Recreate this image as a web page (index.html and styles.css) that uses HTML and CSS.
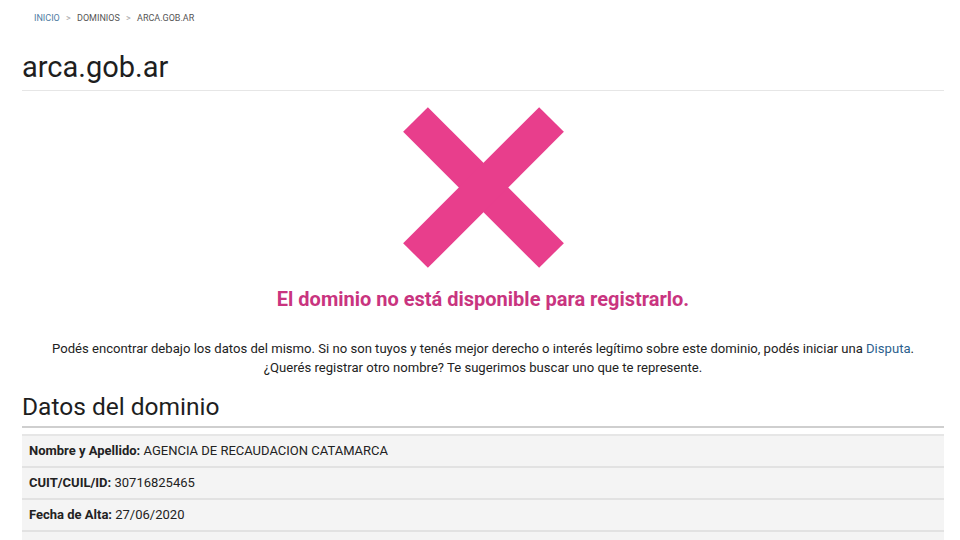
FILE: index.html
```html
<!DOCTYPE html>
<html lang="es">
<head>
    <meta charset="UTF-8">
    <title>arca.gob.ar</title>
    <link rel="stylesheet" href="styles.css">
</head>
<body>
    <div class="page">
        <nav class="crumbs">
            <a href="#">Inicio</a>
            <span class="sep">&gt;</span>
            <span>Dominios</span>
            <span class="sep">&gt;</span>
            <span>arca.gob.ar</span>
        </nav>

        <h1 class="domain">arca.gob.ar</h1>

        <div class="status">
            <svg class="cross" width="161" height="161" viewBox="0 0 161 161">
                <line x1="12.5" y1="12.5" x2="148.5" y2="148.5" />
                <line x1="148.5" y1="12.5" x2="12.5" y2="148.5" />
            </svg>
            <h2 class="status-title">El dominio no está disponible para registrarlo.</h2>
            <p class="status-text">
                Podés encontrar debajo los datos del mismo. Si no son tuyos y tenés mejor derecho o interés legítimo sobre este dominio, podés iniciar una <a href="#">Disputa</a>.<br>
                ¿Querés registrar otro nombre? Te sugerimos buscar uno que te represente.
            </p>
        </div>

        <h2 class="section-title">Datos del dominio</h2>
        <div class="data">
            <div class="row"><b>Nombre y Apellido:</b> AGENCIA DE RECAUDACION CATAMARCA</div>
            <div class="row"><b>CUIT/CUIL/ID:</b> 30716825465</div>
            <div class="row"><b>Fecha de Alta:</b> 27/06/2020</div>
            <div class="row empty"></div>
        </div>
    </div>
</body>
</html>
```

FILE: styles.css
```css
body {
    margin: 0;
    padding: 0;
    background: #fff;
    color: #222;
    font-family: Roboto, "Liberation Sans", sans-serif;
}
.page {
    padding: 0 16px 0 22px;
}
.crumbs {
    padding: 12px 0 0 12px;
    font-size: 9px;
    text-transform: uppercase;
    color: #555;
    line-height: 12px;
}
.crumbs a {
    color: #4f7ca3;
    text-decoration: none;
}
.crumbs .sep {
    color: #aaa;
    margin: 0 4px;
}
.domain {
    margin: 22px 0 0;
    font-size: 29px;
    font-weight: 400;
    line-height: 42px;
    padding-bottom: 2px;
    border-bottom: 1px solid #e6e6e6;
    color: #1e1e1e;
}
.status {
    text-align: center;
    padding-top: 16px;
}
.cross {
    display: block;
    margin: 0 auto 0 381px;
}
.cross line {
    stroke: #e83e8c;
    stroke-width: 35;
}
.status-title {
    margin: 16px 0 0;
    font-size: 20px;
    font-weight: 700;
    color: #c9347f;
    line-height: 30px;
}
.status-text {
    margin: 25px 0 0;
    font-size: 13.1px;
    line-height: 19px;
    color: #222;
}
.status-text a {
    color: #2b5f8e;
    text-decoration: none;
}
.section-title {
    margin: 15px 0 0;
    font-size: 24.5px;
    font-weight: 400;
    line-height: 30px;
    padding-bottom: 4px;
    border-bottom: 2px solid #cfcfcf;
    color: #1e1e1e;
}
.data {
    margin-top: 6px;
    border-top: 2px solid #e6e6e6;
}
.row {
    background: #f4f4f4;
    padding: 8px 7px;
    line-height: 14px;
    font-size: 13px;
    color: #222;
    border-bottom: 2px solid #e2e2e2;
}
.row.empty {
    height: 14px;
}
.row b {
    font-weight: 700;
}
```
